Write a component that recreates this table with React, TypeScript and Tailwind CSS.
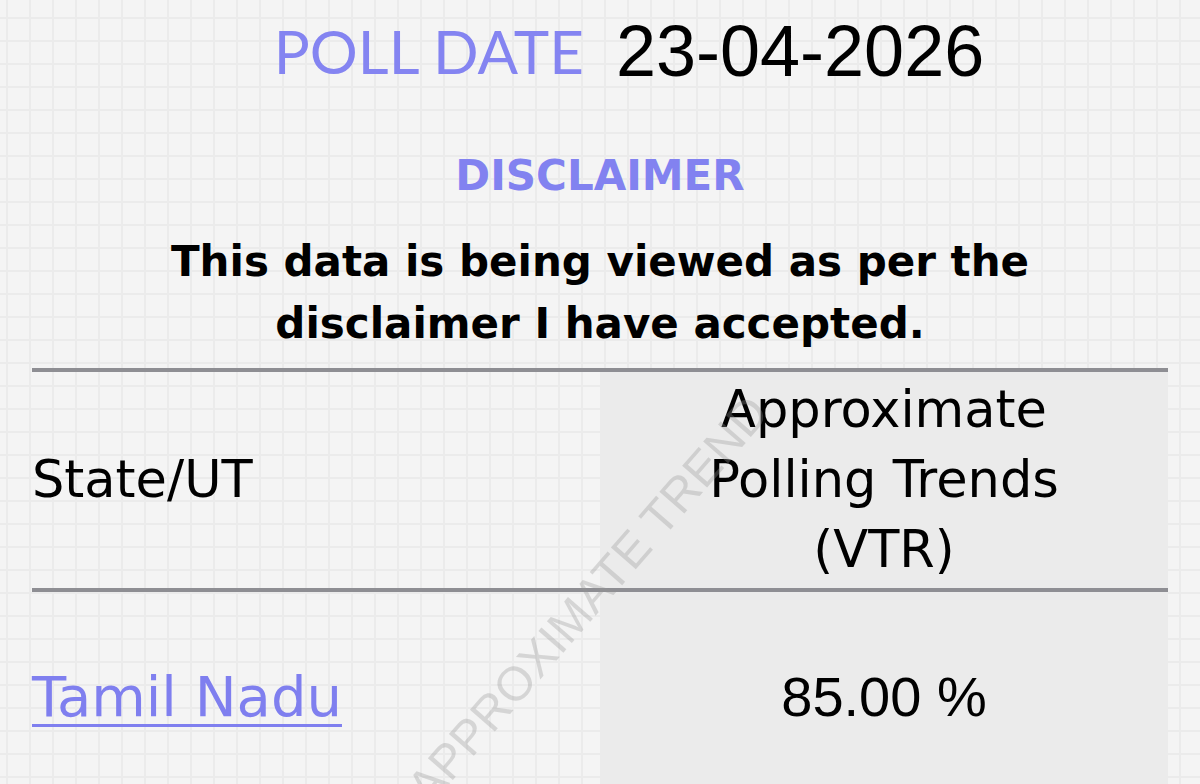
export default function App() {
  return (
    <div className="relative w-[1200px] h-[784px] overflow-hidden bg-[#f4f4f4] bg-[linear-gradient(to_right,#ebebeb_2px,transparent_2px),linear-gradient(to_bottom,#ebebeb_2px,transparent_2px)] bg-[size:23px_23px] bg-[position:6px_17px] text-black">
      <div className="flex h-[102px] items-center justify-center gap-[32px] pl-[58px]">
        <span className="font-['Lato',sans-serif] text-[60px] leading-none text-[#8484f1]">POLL DATE</span>
        <span className="font-['Liberation_Sans',Arial,sans-serif] text-[72px] leading-none">23-04-2026</span>
      </div>

      <div className="mt-[48px] text-center font-['DejaVu_Sans',sans-serif] font-bold">
        <div className="text-[42px] leading-[52px] text-[#8282f0]">DISCLAIMER</div>
        <p className="mt-[29px] text-[42px] leading-[62px]">
          This data is being viewed as per the
          <br />
          disclaimer I have accepted.
        </p>
      </div>

      <div className="ml-[32px] mt-[13px] w-[1136px] border-t-4 border-[#8e8e93] font-['DejaVu_Sans',sans-serif] text-[51px]">
        <div className="grid grid-cols-2 border-b-4 border-[#8e8e93]">
          <div className="flex h-[216px] items-center">State/UT</div>
          <div className="flex items-center justify-center bg-[#ebebeb] text-center leading-[70px]">
            <span>
              Approximate
              <br />
              Polling Trends
              <br />
              (VTR)
            </span>
          </div>
        </div>
        <div className="grid grid-cols-2">
          <div className="flex h-[210px] items-center">
            <a href="#" className="text-[56px] text-[#7f7fef] underline decoration-[3px] underline-offset-[8px]">
              Tamil Nadu
            </a>
          </div>
          <div className="flex items-center justify-center bg-[#ebebeb] font-['Liberation_Sans',Arial,sans-serif] text-[56px]">
            85.00 %
          </div>
        </div>
      </div>

      <div className="pointer-events-none absolute left-[588px] top-[600px] -translate-x-1/2 -translate-y-1/2 -rotate-[49deg] whitespace-nowrap font-['Liberation_Sans',Arial,sans-serif] text-[48px] text-[rgba(150,150,150,0.32)]">
        APPROXIMATE TREND
      </div>
    </div>
  );
}
